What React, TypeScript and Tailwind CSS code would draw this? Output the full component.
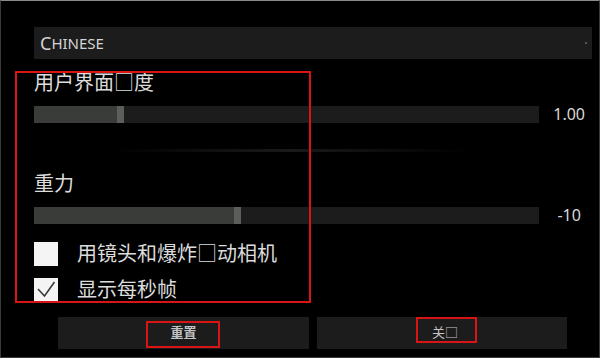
import React from "react";

const cjk = { fontFamily: '"Noto Sans", "Noto Sans CJK SC", sans-serif' };

function Slider({ pos, value }: { pos: number; value: string }) {
  return (
    <div className="flex items-center">
      <div className="relative h-[17px] w-[507px] bg-[#1c1c1c]">
        <div className="absolute left-0 top-0 h-full bg-[#3a3c3a]" style={{ width: pos }} />
        <div className="absolute top-0 h-full w-[7px] bg-[#5c5e5c]" style={{ left: pos }} />
      </div>
      <div className="w-[60px] text-center text-[16px] leading-[20px] text-[#d8d8d8]">{value}</div>
    </div>
  );
}

function Check({ checked, label }: { checked: boolean; label: string }) {
  return (
    <div className="flex items-center">
      <div className="h-[24px] w-[24px] bg-[#f4f4f4]">
        {checked && (
          <svg width="24" height="24" viewBox="0 0 24 24">
            <path d="M4 11 L10.5 18 L20.5 4" fill="none" stroke="#3a3a3a" strokeWidth="1.6" />
          </svg>
        )}
      </div>
      <span className="ml-[19px] text-[20px] leading-[24px] text-[#dcdcdc]">{label}</span>
    </div>
  );
}

export default function App() {
  return (
    <div
      className="relative h-[358px] w-[600px] overflow-hidden border border-[#3a3a3a] border-t-[#8a8a8a] bg-black"
      style={cjk}
    >
      <div className="flex flex-col pl-[33px] pt-[26px]">
        <div className="relative flex h-[32px] w-[558px] items-center bg-[#1c1c1c] pl-[6px] text-[#d4d4d4]">
          <span className="text-[18px] leading-none">C</span>
          <span className="text-[15px] leading-none">HINESE</span>
          <div className="absolute right-[5px] top-[15px] h-[2px] w-[2px] bg-[#555]" />
        </div>
        <div className="mt-[12px] text-[20px] leading-[24px] text-[#dcdcdc]">用户界面□度</div>
        <div className="mt-[9px]">
          <Slider pos={83} value="1.00" />
        </div>
        <div className="ml-[76px] mt-[25px] h-[3px] w-[360px] bg-linear-to-r from-transparent via-[#1a1a1a] to-transparent" />
        <div className="mt-[20px] text-[20px] leading-[24px] text-[#dcdcdc]">重力</div>
        <div className="mt-[9px]">
          <Slider pos={200} value="-10" />
        </div>
        <div className="mt-[17px] flex flex-col gap-[12px]">
          <Check checked={false} label="用镜头和爆炸□动相机" />
          <Check checked={true} label="显示每秒帧" />
        </div>
        <div className="ml-[24px] mt-[15px] flex gap-[8px]">
          <div className="flex h-[32px] w-[251px] items-center justify-center bg-[#1c1c1c] text-[13px] font-bold text-[#c4c4c4]">
            重置
          </div>
          <div className="flex h-[32px] w-[250px] items-center justify-center bg-[#1c1c1c] text-[13px] text-[#c4c4c4]">
            <span className="ml-[6px]">关□</span>
          </div>
        </div>
      </div>
      <div className="absolute left-[14px] top-[70px] h-[232px] w-[296px] border-2 border-[#d81414]" />
      <div className="absolute left-[145px] top-[320px] h-[27px] w-[74px] border-2 border-[#d81414]" />
      <div className="absolute left-[415px] top-[316px] h-[26px] w-[61px] border-2 border-[#d81414]" />
    </div>
  );
}
